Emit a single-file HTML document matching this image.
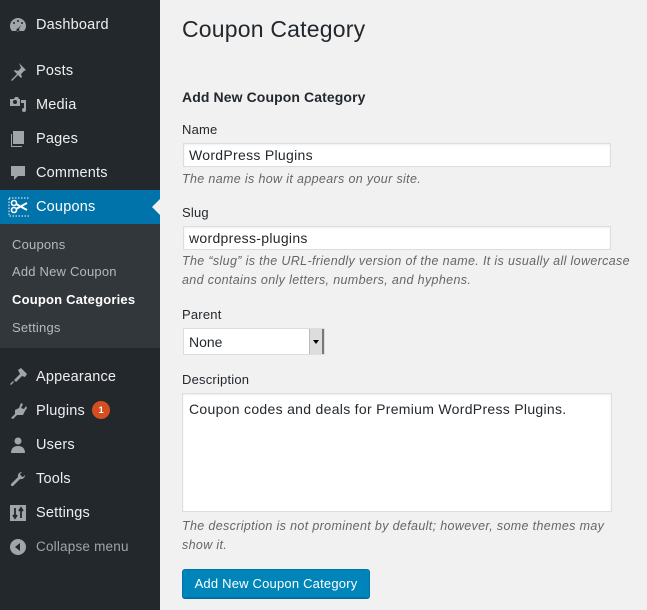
<!DOCTYPE html>
<html><head><style>
*{margin:0;padding:0;box-sizing:border-box}
body{width:647px;height:610px;overflow:hidden;background:#f1f1f1;font-family:"Liberation Sans","DejaVu Sans",sans-serif;color:#23282d;position:relative}
#side{position:absolute;left:0;top:0;width:160px;height:610px;background:#23282d}
.mi{position:absolute;left:0;width:160px;height:34px;color:#eee;font-size:14.5px;line-height:34px;padding-left:36px;letter-spacing:.2px}
.ic{position:absolute;left:8px;top:7px;width:20px;height:20px}
.cur{background:#0073aa;color:#fff}
#sub{position:absolute;left:0;top:224px;width:160px;height:124px;background:#32373c}
.si{position:absolute;left:12px;font-size:13px;color:#b4b9be;letter-spacing:.2px}
.lab{position:absolute;left:182px;font-size:13px;color:#23282d;letter-spacing:.2px}
.hint{position:absolute;left:182px;font-size:12.5px;font-style:italic;color:#666;line-height:19px;letter-spacing:.35px}
.inp{position:absolute;left:183px;width:428px;background:#fff;border:1px solid #ddd;box-shadow:inset 0 1px 2px rgba(0,0,0,.07);font-size:14px;padding-left:5px;letter-spacing:.3px}
</style></head><body>
<div id="side">
<div class="mi" style="top:8px">Dashboard<svg class="ic" viewBox="0 0 20 20"><path fill="#a0a5aa" d="M10 3a8 8 0 0 0-8 8c0 2 .7 3.7 2 5h12a8 8 0 0 0 2-5 8 8 0 0 0-8-8zm0 2a1 1 0 1 1 0 2 1 1 0 0 1 0-2zM6 7a1 1 0 1 1 0 2 1 1 0 0 1 0-2zm8 0a1 1 0 1 1 0 2 1 1 0 0 1 0-2zm-1 3l-2 4a1.5 1.5 0 1 1-1-.5z"/></svg></div>
<div class="mi" style="top:54px">Posts<svg class="ic" viewBox="0 0 20 20"><path fill="#a0a5aa" d="M11 2l7 7-2 1-3 3 1 3-1 1-3-3-6 6-1-1 6-6-3-3 1-1 3 1 3-3z"/></svg></div>
<div class="mi" style="top:88px">Media<svg class="ic" viewBox="0 0 20 20"><path fill="#a0a5aa" d="M2 4h4l1-2h3l1 2h1v7H2zM7 9a2 2 0 1 0 0-4 2 2 0 0 0 0 4zm6-4h5v10a2 2 0 1 1-2-2V8h-3z"/></svg></div>
<div class="mi" style="top:122px">Pages<svg class="ic" viewBox="0 0 20 20"><path fill="#a0a5aa" d="M5 2h11v13H5zM3 5h1v12h10v1H3z"/></svg></div>
<div class="mi" style="top:156px">Comments<svg class="ic" viewBox="0 0 20 20"><path fill="#a0a5aa" d="M3 3h14v10h-7l-4 4v-4H3z"/></svg></div>
<div class="mi cur" style="top:190px">Coupons<svg class="ic" viewBox="0 0 20 20" style="left:6px;top:7px;width:24px;height:20px"><rect x="1" y="1" width="22" height="18" fill="none" stroke="#fff" stroke-dasharray="1.5 1.5" stroke-width="1"/><circle cx="6" cy="6" r="2.5" fill="none" stroke="#fff" stroke-width="1.6"/><circle cx="6" cy="13" r="2.5" fill="none" stroke="#fff" stroke-width="1.6"/><path d="M8 7l11 6M8 12l11-6" stroke="#fff" stroke-width="2"/></svg>
<div style="position:absolute;right:0;top:9px;border:8px solid transparent;border-right-color:#f1f1f1"></div></div>
<div id="sub">
<div class="si" style="top:13px">Coupons</div>
<div class="si" style="top:40px">Add New Coupon</div>
<div class="si" style="top:68px;color:#fff;font-weight:bold">Coupon Categories</div>
<div class="si" style="top:96px">Settings</div>
</div>
<div class="mi" style="top:360px">Appearance<svg class="ic" viewBox="0 0 20 20"><path fill="#a0a5aa" d="M10 3l3-2 6 6-2 3-3-1-5 5-1 1-2-2 1-1 5-5zM5 14l1 1-3 3-1-1z"/></svg></div>
<div class="mi" style="top:394px">Plugins <span style="display:inline-block;width:18px;height:18px;border-radius:9px;background:#d54e21;color:#fff;font-size:9px;font-weight:bold;line-height:18px;text-align:center;vertical-align:2px;margin-left:3px">1</span><svg class="ic" viewBox="0 0 20 20"><path fill="#a0a5aa" d="M13 2l2 1-2 4 3 1 2-3 1 2-2 3-2 4H9l-4 4-2-1 4-4V9l4-2z"/></svg></div>
<div class="mi" style="top:428px">Users<svg class="ic" viewBox="0 0 20 20"><circle cx="10" cy="6" r="3.5" fill="#a0a5aa"/><path fill="#a0a5aa" d="M3 18c0-5 3-7 7-7s7 2 7 7z"/></svg></div>
<div class="mi" style="top:462px">Tools<svg class="ic" viewBox="0 0 20 20"><path fill="#a0a5aa" d="M17 6a4 4 0 0 1-5 4L5 17a1.5 1.5 0 0 1-2-2l7-7a4 4 0 0 1 4-5l-2 2 1 2 2 1z"/></svg></div>
<div class="mi" style="top:496px">Settings<svg class="ic" viewBox="0 0 20 20"><rect x="2" y="2" width="16" height="16" fill="#a0a5aa"/><path d="M7 5v10M5 12l2 3 2-3M13 15V5M11 8l2-3 2 3" stroke="#23282d" stroke-width="1.8" fill="none"/></svg></div>
<div class="mi" style="top:530px;color:#a0a5aa;font-size:13.5px">Collapse menu<svg class="ic" viewBox="0 0 20 20"><circle cx="10" cy="10" r="8" fill="#a0a5aa"/><path d="M12 6v8l-5-4z" fill="#23282d"/></svg></div>
</div>

<div style="position:absolute;left:182px;top:16px;font-size:23px;color:#23282d;letter-spacing:.2px">Coupon Category</div>
<div style="position:absolute;left:182px;top:89px;font-size:14px;font-weight:bold;letter-spacing:.1px">Add New Coupon Category</div>
<div class="lab" style="top:122px">Name</div>
<div class="inp" style="top:143px;height:24px;line-height:22px">WordPress Plugins</div>
<div class="hint" style="top:170px">The name is how it appears on your site.</div>
<div class="lab" style="top:205px">Slug</div>
<div class="inp" style="top:226px;height:24px;line-height:22px">wordpress-plugins</div>
<div class="hint" style="top:252px;width:460px">The “slug” is the URL-friendly version of the name. It is usually all lowercase<br>and contains only letters, numbers, and hyphens.</div>
<div class="lab" style="top:307px">Parent</div>
<div style="position:absolute;left:183px;top:328px;width:142px;height:27px;background:#fff;border:1px solid #ddd;font-size:14px;line-height:26px;padding-left:5px">None
<div style="position:absolute;right:0;top:0;width:15px;height:25px;background:#ddd;border-left:1px solid #bbb;border-right:2px solid #777"><div style="position:absolute;left:3px;top:11px;border:3px solid transparent;border-top:4px solid #000;border-bottom:0"></div></div></div>
<div class="lab" style="top:372px">Description</div>
<div class="inp" style="top:393px;left:182px;width:430px;height:119px;padding:5px 6px;line-height:20px">Coupon codes and deals for Premium WordPress Plugins.</div>
<div class="hint" style="top:517px;width:460px">The description is not prominent by default; however, some themes may<br>show it.</div>
<div style="position:absolute;left:182px;top:569px;width:188px;height:29px;background:#0085ba;border:1px solid #0073aa;border-radius:3px;box-shadow:0 1px 0 #006799;color:#fff;font-size:13px;line-height:27px;text-align:center;letter-spacing:.2px">Add New Coupon Category</div>
</body></html>
